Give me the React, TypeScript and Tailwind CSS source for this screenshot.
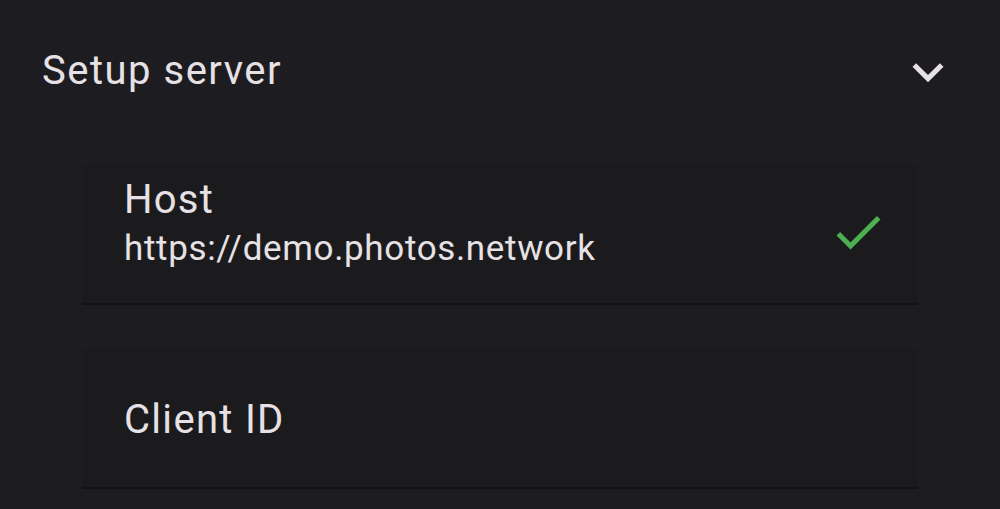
import { useState } from "react";

function ChevronDown() {
    return (
        <svg viewBox="0 0 24 24" className="w-[62px] h-[62px]" fill="#e6e1e5">
            <path d="M16.59 8.59L12 13.17 7.41 8.59 6 10l6 6 6-6z" />
        </svg>
    );
}

function CheckIcon() {
    return (
        <svg viewBox="0 0 24 24" className="w-[60px] h-[60px]" fill="#4caf50">
            <path d="M9 16.17L4.83 12l-1.42 1.41L9 19 21 7l-1.41-1.41z" />
        </svg>
    );
}

export default function App() {
    const [host] = useState("https://demo.photos.network");

    return (
        <main
            className="w-[1000px] h-[509px] bg-[#1d1c21] text-[#e6e1e5] overflow-hidden"
            style={{ fontFamily: "Roboto, 'Noto Sans', sans-serif" }}
        >
            {/* section header */}
            <div className="h-[144px] flex items-center justify-between pl-[42px] pr-[41px]">
                <h2 className="text-[40px] leading-[48px] tracking-[1.5px] mb-[2px]">Setup server</h2>
                <ChevronDown />
            </div>

            <div className="mt-[19px] mx-[82px] flex flex-col gap-[42px]">
                {/* host field */}
                <div className="h-[142px] bg-[#1b1b1d] rounded-t-[8px] border-b-2 border-[#121214] flex items-center justify-between">
                    <div className="self-start pt-[13px] pl-[42px] flex flex-col">
                        <span className="text-[40px] leading-[48px] tracking-[1.25px]">Host</span>
                        <span className="text-[35px] leading-[44px] tracking-[0.65px] mt-[3px]">{host}</span>
                    </div>
                    <div className="mr-[30px] mb-[2px]">
                        <CheckIcon />
                    </div>
                </div>

                {/* client id field */}
                <div className="h-[142px] bg-[#1b1b1d] rounded-t-[8px] border-b-2 border-[#121214] flex items-center pl-[42px] pt-[5px]">
                    <span className="text-[40px] leading-[48px] tracking-[1.3px]">Client ID</span>
                </div>
            </div>
        </main>
    );
}
